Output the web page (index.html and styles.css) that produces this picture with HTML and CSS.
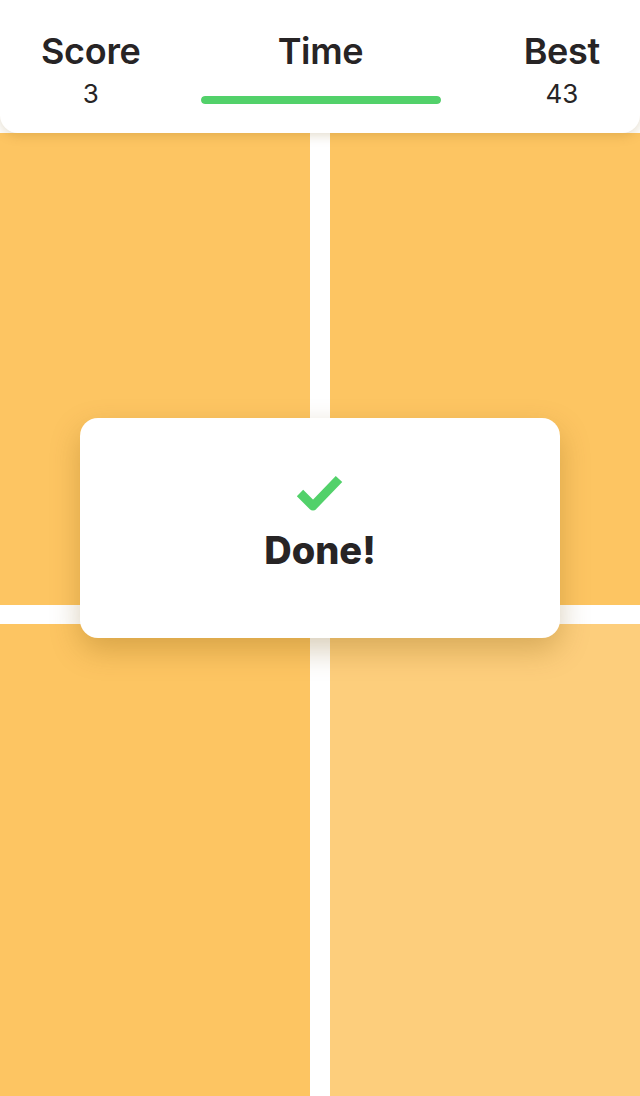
FILE: index.html
```html
<!DOCTYPE html>
<html>
<head>
<meta charset="utf-8">
<link rel="stylesheet" href="styles.css">
</head>
<body>
<div class="app">
  <header class="bar">
    <div class="stat stat-left">
      <div class="label">Score</div>
      <div class="value">3</div>
    </div>
    <div class="stat stat-mid">
      <div class="label">Time</div>
      <div class="timer"><div class="timer-fill"></div></div>
    </div>
    <div class="stat stat-right">
      <div class="label">Best</div>
      <div class="value">43</div>
    </div>
  </header>
  <main class="grid">
    <div class="tile"></div>
    <div class="tile"></div>
    <div class="tile"></div>
    <div class="tile tile-light"></div>
  </main>
  <div class="modal">
    <svg class="check" width="50" height="42" viewBox="0 0 50 42">
      <polyline points="5,21 18,34 44,7" fill="none" stroke="#52d16a" stroke-width="9" stroke-linecap="butt" stroke-linejoin="round"/>
    </svg>
    <div class="done">Done!</div>
  </div>
</div>
</body>
</html>
```
FILE: styles.css
```css
* { box-sizing: border-box; }
html, body { margin: 0; padding: 0; }
body {
  width: 640px;
  height: 1096px;
  background: #ffffff;
  font-family: Inter, "Noto Sans", sans-serif;
  color: #272425;
  overflow: hidden;
}
.app {
  position: relative;
  width: 640px;
  height: 1096px;
  display: flex;
  flex-direction: column;
}
.bar {
  height: 133px;
  flex: none;
  background: #fff;
  border-radius: 0 0 18px 18px;
  box-shadow: 0 2px 12px rgba(120, 80, 0, 0.22);
  display: grid;
  grid-template-columns: 1fr auto 1fr;
  align-items: start;
  padding: 30px 40px 0 41px;
  position: relative;
  z-index: 2;
}
.stat { display: flex; flex-direction: column; align-items: center; }
.stat-left { justify-self: start; }
.stat-right { justify-self: end; }
.label {
  font-size: 36px;
  font-weight: 600;
  line-height: 42px;
  letter-spacing: -0.3px;
}
.value {
  font-size: 26px;
  font-weight: 400;
  line-height: 32px;
  margin-top: 6px;
}
.timer {
  width: 240px;
  height: 8px;
  margin-top: 24px;
  border-radius: 4px;
  background: #e8e8e8;
  overflow: hidden;
}
.timer-fill { width: 100%; height: 100%; background: #52d16a; border-radius: 4px; }
.grid {
  flex: 1;
  display: grid;
  grid-template-columns: 1fr 1fr;
  grid-template-rows: 1fr 1fr;
  column-gap: 20px;
  row-gap: 19px;
}
.tile { background: #fdc562; }
.tile-light { background: #fdce7c; }
.modal {
  position: absolute;
  left: 80px;
  top: 418px;
  width: 480px;
  height: 220px;
  background: #fff;
  border-radius: 18px;
  box-shadow: 0 12px 30px rgba(120, 80, 0, 0.28);
  display: flex;
  flex-direction: column;
  align-items: center;
  padding-top: 54px;
  z-index: 3;
}
.check { display: block; }
.done {
  font-size: 38px;
  font-weight: 800;
  line-height: 44px;
  margin-top: 14px;
}
```
